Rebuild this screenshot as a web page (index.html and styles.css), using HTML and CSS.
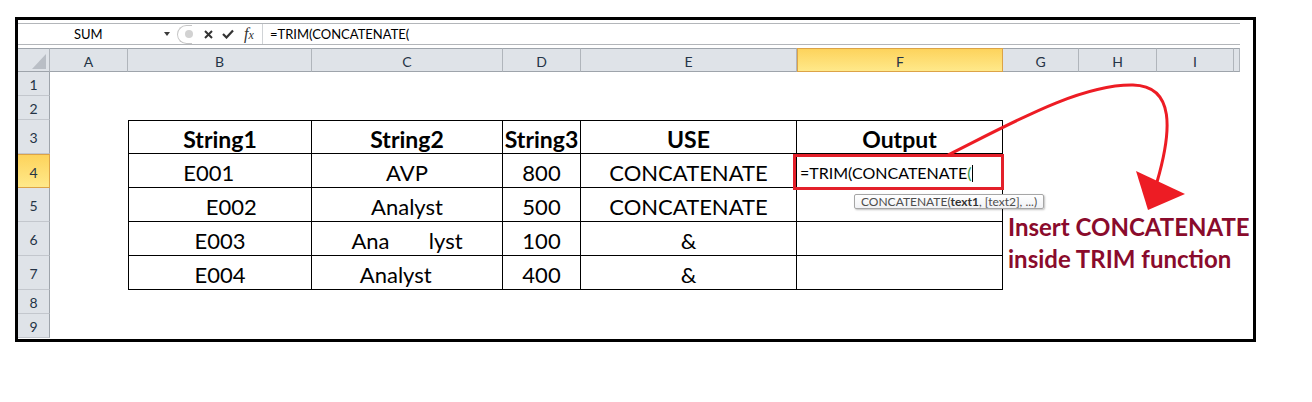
FILE: index.html
```html
<!DOCTYPE html>
<html lang="en">
<head>
<meta charset="utf-8">
<title>TRIM CONCATENATE</title>
<link rel="stylesheet" href="styles.css">
</head>
<body>
<div class="page">
  <div class="frame">
    <div class="excel">
      <div class="fbar">
        <div class="namebox"><span class="name">SUM</span><span class="dd"></span></div>
        <div class="fbtns">
          <span class="pill"><span class="dot"></span></span>
          <svg class="ic-x" width="9" height="9" viewBox="0 0 9 9"><path d="M1 1 L8 8 M8 1 L1 8" stroke="#333" stroke-width="2" fill="none"/></svg>
          <svg class="ic-ok" width="12" height="10" viewBox="0 0 12 10"><path d="M1 5 L4.5 8.5 L11 1.5" stroke="#333" stroke-width="2.2" fill="none"/></svg>
          <span class="fx"><i>f</i><i class="fx-x">x</i></span>
        </div>
        <div class="finput">=TRIM(CONCATENATE(</div>
      </div>
      <div class="sheet">
        <div class="corner"><span class="tri"></span></div>
        <div class="ch">A</div>
        <div class="ch">B</div>
        <div class="ch">C</div>
        <div class="ch">D</div>
        <div class="ch">E</div>
        <div class="ch sel">F</div>
        <div class="ch">G</div>
        <div class="ch">H</div>
        <div class="ch">I</div>
        <div class="ch"></div>
        <div class="rh">1</div>
        <div class="rh">2</div>
        <div class="rh">3</div>
        <div class="rh sel">4</div>
        <div class="rh">5</div>
        <div class="rh">6</div>
        <div class="rh">7</div>
        <div class="rh">8</div>
        <div class="rh">9</div>
        <div class="tbl">
          <div class="td th">String1</div>
          <div class="td th">String2</div>
          <div class="td th">String3</div>
          <div class="td th">USE</div>
          <div class="td th">Output</div>

          <div class="td">E001    </div>
          <div class="td">AVP</div>
          <div class="td">800</div>
          <div class="td">CONCATENATE</div>
          <div class="td fcell">=TRIM(CONCATENATE<span class="paren">(</span><span class="caret"></span>
            <span class="hl"></span>
            <span class="tip">CONCATENATE(<b>text1</b>, [text2], ...)</span>
          </div>

          <div class="td">    E002</div>
          <div class="td">Analyst</div>
          <div class="td">500</div>
          <div class="td">CONCATENATE</div>
          <div class="td"></div>

          <div class="td">E003</div>
          <div class="td">Ana       lyst</div>
          <div class="td">100</div>
          <div class="td">&amp;</div>
          <div class="td"></div>

          <div class="td">E004</div>
          <div class="td">Analyst    </div>
          <div class="td">400</div>
          <div class="td">&amp;</div>
          <div class="td"></div>
        </div>
      </div>
    </div>
  </div>
  <p class="note">Insert CONCATENATE<br>inside TRIM function</p>
  <svg class="arrow" width="1312" height="402" viewBox="0 0 1312 402">
    <path d="M948,155 C1010,124 1080,84 1133,85 C1175,86 1172,130 1157,182" fill="none" stroke="#ed1c24" stroke-width="3"/>
    <polygon points="1136,171 1185,194 1148,210" fill="#ed1c24"/>
  </svg>
</div>
</body>
</html>
```

FILE: styles.css
```css
* { box-sizing: border-box; }
body { margin: 0; background: #fff; font-family: Lato, "Liberation Sans", sans-serif; }
.page { position: relative; width: 1312px; height: 402px; padding-top: 17px; }
.frame {
  margin-left: 15px;
  width: 1241px;
  height: 325px;
  border: 3px solid #000;
  padding-top: 3px;
}
.excel { width: 1222px; }

/* formula bar */
.fbar {
  display: flex;
  height: 22px;
  border-top: 1px solid #b3b6ba;
  border-bottom: 1px solid #b3b6ba;
  margin-bottom: 3px;
  font-size: 13px;
  color: #000;
}
.namebox { width: 157px; display: flex; align-items: center; padding-left: 56px; padding-right: 5px; }
.dd {
  margin-left: auto;
  width: 0; height: 0;
  border-top: 4px solid #3c3c3c;
  border-left: 3px solid transparent;
  border-right: 3px solid transparent;
}
.fbtns { width: 87px; display: flex; align-items: center; }
.pill {
  margin-left: 2px;
  width: 15px; height: 19px;
  border: 1px solid #c6c6c6; border-right: 0;
  border-radius: 10px 0 0 10px;
  display: flex; align-items: center;
  padding-left: 7px;
}
.dot { width: 8px; height: 8px; border-radius: 50%; background: #d2d2d2; flex: none; }
.ic-x { margin-left: 12px; }
.ic-ok { margin-left: 9px; }
.fx { margin-left: 10px; font-family: "Liberation Serif", serif; font-size: 16px; color: #333; line-height: 1; }
.fx-x { font-size: 12px; }
.finput { flex: 1; border-left: 1px solid #d0d3d6; padding-left: 7px; display: flex; align-items: center; }

/* sheet grid */
.sheet {
  display: grid;
  grid-template-columns: 32px 78px 184px 191px 78px 216px 206px 76px 78px 77px 6px;
  grid-template-rows: 24px 24px 24px 34px 34px 34px 34px 34px 24px 24px;
}
.corner {
  background: #dfe3e8;
  border-top: 1px solid #9ea4ab;
  border-bottom: 1px solid #9ea4ab;
  border-right: 1px solid #b0b5bb;
  display: flex; justify-content: flex-end; align-items: flex-end;
  padding: 0 3px 2px 0;
}
.tri { width: 0; height: 0; border-left: 14px solid transparent; border-bottom: 15px solid #b9bec5; }
.ch {
  background: #dfe3e8;
  border-top: 1px solid #9ea4ab;
  border-bottom: 1px solid #9ea4ab;
  border-right: 1px solid #b0b5bb;
  display: flex; align-items: center; justify-content: center;
  padding-top: 2px;
  font-size: 14px; color: #253446;
}
.rh {
  grid-column: 1;
  background: #dfe3e8;
  border-bottom: 1px solid #c3c7cd;
  border-right: 1px solid #9ea4ab;
  display: flex; align-items: center; justify-content: center;
  padding-top: 2px;
  font-size: 14px; color: #253446;
}
.ch.sel, .rh.sel {
  background: linear-gradient(#fdd35c, #ffe98a);
  border-color: #dca347;
}
.ch.sel { border-left: 1px solid #dca347; }
.rh.sel { border-top: 1px solid #dca347; }

/* data table */
.tbl {
  grid-row: 4 / 9;
  grid-column: 3 / 8;
  display: grid;
  grid-template-columns: 183px 191px 78px 216px 206px;
  grid-template-rows: 33px 34px 34px 34px 34px;
  border-top: 1px solid #000;
  border-left: 1px solid #000;
  font-size: 22px;
  color: #000;
}
.td {
  border-right: 1px solid #000;
  border-bottom: 1px solid #000;
  display: flex; align-items: flex-end; justify-content: center;
  padding-bottom: 2px;
  line-height: 24px;
  white-space: pre;
}
.th { font-weight: 700; font-size: 23px; }
.fcell {
  position: relative;
  justify-content: flex-start;
  padding-left: 3px;
  font-size: 16px;
  white-space: normal;
}
.paren { color: #2f9a46; }
.caret { display: inline-block; width: 1px; height: 17px; background: #000; margin-left: 1px; margin-bottom: 3px; }
.hl {
  position: absolute;
  left: -4px; top: 0;
  width: 211px; height: 36px;
  border: 3px solid #e3202a;
}
.tip {
  position: absolute;
  left: 57px; top: 40px;
  z-index: 2;
  height: 15px;
  padding: 0 6px;
  font-size: 12px; line-height: 13px;
  color: #4d4d4d;
  white-space: nowrap;
  background: linear-gradient(#ffffff, #f1f2f5);
  border: 1px solid #a6a6a6;
  border-radius: 2px;
  box-shadow: 1px 1px 2px rgba(0,0,0,0.25);
}
.tip b { color: #333; }

/* annotation */
.note {
  position: absolute;
  left: 1008px; top: 211px;
  margin: 0;
  font-weight: 700;
  font-size: 24px;
  line-height: 32px;
  color: #8a0b2c;
}
.arrow { position: absolute; left: 0; top: 0; pointer-events: none; }
```
